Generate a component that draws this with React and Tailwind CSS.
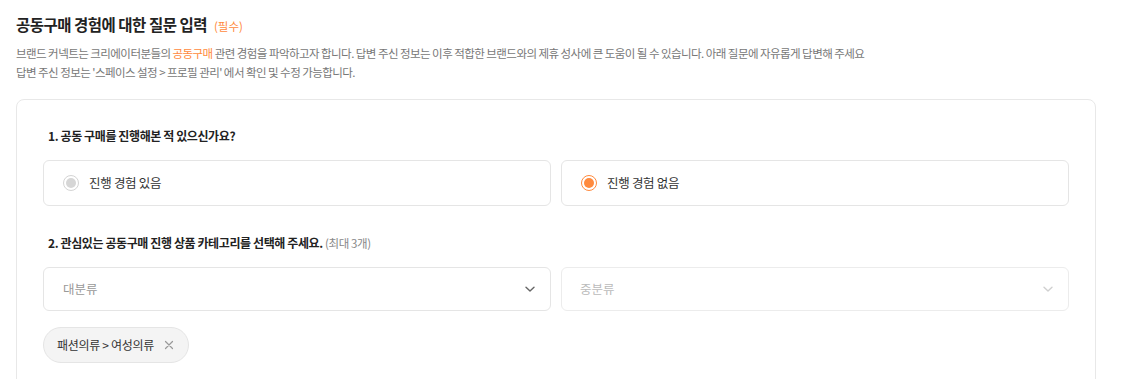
import { useState } from "react"

const FONT = { fontFamily: '"Noto Sans CJK KR", "Noto Sans", sans-serif' }

function Radio({ checked }) {
  return (
    <span
      className={`flex h-4 w-4 items-center justify-center rounded-full border ${
        checked ? "border-[#ff8a3d]" : "border-[#d4d4d4]"
      }`}
    >
      <span className={`h-[10px] w-[10px] rounded-full ${checked ? "bg-[#ff8a3d]" : "bg-[#d6d6d6]"}`}></span>
    </span>
  )
}

function Chevron({ disabled }) {
  return (
    <svg width="12" height="12" viewBox="0 0 12 12" fill="none">
      <path
        d="M2 4.2 6 8l4-3.8"
        stroke={disabled ? "#d0d0d0" : "#666"}
        strokeWidth="1.4"
        strokeLinecap="round"
        strokeLinejoin="round"
      />
    </svg>
  )
}

export default function App() {
  const [experience, setExperience] = useState("no")

  return (
    <div className="min-h-[379px] bg-white px-4 pt-[13px] text-[#222]" style={FONT}>
      <div className="flex items-baseline gap-[7px]">
        <h2 className="text-[15.5px] font-bold leading-[22px] tracking-[-0.5px]">공동구매 경험에 대한 질문 입력</h2>
        <span className="text-[11.5px] text-[#ff8a3d]">(필수)</span>
      </div>
      <div className="mt-[9px] text-[11.5px] leading-[19px] tracking-[-0.55px] text-[#777]">
        <p>
          브랜드 커넥트는 크리에이터분들의 <span className="text-[#ff8a3d]">공동구매</span> 관련 경험을 파악하고자 합니다. 답변 주신 정보는 이후 적합한 브랜드와의 제휴 성사에 큰 도움이 될 수 있습니다. 아래 질문에 자유롭게 답변해 주세요
        </p>
        <p>답변 주신 정보는 '스페이스 설정 &gt; 프로필 관리' 에서 확인 및 수정 가능합니다.</p>
      </div>

      <div className="mt-[17px] w-[1080px] rounded-lg border border-[#e8e8e8] px-[26px] pt-[26px] pb-6">
        <p className="pl-[5px] text-[12px] font-bold leading-5 tracking-[-0.4px]">1. 공동 구매를 진행해본 적 있으신가요?</p>
        <div className="mt-[14px] grid grid-cols-2 gap-[10px]">
          {[
            { key: "yes", label: "진행 경험 있음" },
            { key: "no", label: "진행 경험 없음" },
          ].map((opt) => (
            <button
              key={opt.key}
              type="button"
              onClick={() => setExperience(opt.key)}
              className="flex h-[46px] items-center gap-[10px] rounded-md border border-[#e5e5e5] bg-white pl-[19px] text-left text-[12.5px] tracking-[-0.3px] text-[#333]"
            >
              <Radio checked={experience === opt.key} />
              <span>{opt.label}</span>
            </button>
          ))}
        </div>

        <p className="mt-[27px] pl-[5px] text-[12px] font-bold leading-5 tracking-[-0.4px]">
          2. 관심있는 공동구매 진행 상품 카테고리를 선택해 주세요.{" "}
          <span className="text-[11.5px] font-normal text-[#888]">(최대 3개)</span>
        </p>
        <div className="mt-[14px] grid grid-cols-2 gap-[10px]">
          <div className="flex h-[44px] items-center justify-between rounded-md border border-[#e5e5e5] pr-[14px] pl-[19px] text-[12.5px] text-[#999]">
            <span>대분류</span>
            <Chevron />
          </div>
          <div className="flex h-[44px] items-center justify-between rounded-md border border-[#ececec] pr-[14px] pl-[18px] text-[12.5px] text-[#bbb]">
            <span>중분류</span>
            <Chevron disabled />
          </div>
        </div>

        <div className="mt-4 flex">
          <span className="flex h-9 items-center gap-[10px] rounded-full border border-[#e5e5e5] bg-[#f4f4f4] pr-[14px] pl-[13px] text-[12px] tracking-[-0.3px] text-[#333]">
            패션의류 &gt; 여성의류
            <svg width="10" height="10" viewBox="0 0 10 10">
              <path d="M1.5 1.5l7 7M8.5 1.5l-7 7" stroke="#999" strokeWidth="1.2" strokeLinecap="round" />
            </svg>
          </span>
        </div>
      </div>
    </div>
  )
}
